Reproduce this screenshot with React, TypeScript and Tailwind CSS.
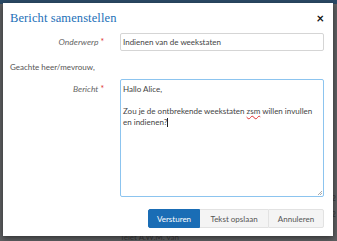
import React from "react";

const App = () => {
  return (
    <div className="relative w-[337px] h-[241px] overflow-hidden bg-[#5f6062] font-['Lato',sans-serif]">
      {/* dimmed page behind the dialog */}
      <div className="h-[4px] bg-[#2b4a66]" />
      <div className="absolute right-[1px] top-[190px] text-[8px] leading-[16px] text-[#3a3a3a]">
        <div>2</div>
        <div>2</div>
      </div>
      <div className="absolute left-[120px] top-[234px] text-[8px] leading-[7px] text-[#3a3a3a]">Telet A.W.M. van</div>

      <div className="absolute left-[3px] top-[3px] w-[330px] h-[233px] bg-white shadow-[0_2px_6px_rgba(0,0,0,0.5)] flex flex-col">
        <div className="flex items-center justify-between pl-[7px] pr-[9px] pt-[2px] h-[28px]">
          <h1 className="text-[12.5px] text-[#1c6fb8] font-['Liberation_Serif',serif] tracking-[0.1px]">
            Bericht samenstellen
          </h1>
          <span className="text-[13px] font-bold text-[#111] leading-none">×</span>
        </div>

        <div className="flex items-center mt-[2px]">
          <label className="w-[104px] text-right pr-[3px] text-[8.5px] italic text-[#666]">
            Onderwerp <span className="text-[#e03030] not-italic">*</span>
          </label>
          <div className="ml-[13px] w-[204px] h-[18px] border border-[#d5d5d5] rounded-[2px] flex items-center px-[2px] text-[8px] text-[#444]">
            Indienen van de weekstaten
          </div>
        </div>

        <div className="pl-[7px] mt-[10px] text-[8px] text-[#555]">Geachte heer/mevrouw,</div>

        <div className="flex items-start mt-[6px]">
          <label className="w-[104px] text-right pr-[3px] mt-[4px] text-[8.5px] italic text-[#666]">
            Bericht <span className="text-[#e03030] not-italic">*</span>
          </label>
          <div className="relative ml-[13px] w-[204px] h-[118px] border border-[#8cc4ef] rounded-[2px] px-[2px] pt-[4px] text-[8px] leading-[11px] text-[#444]">
            <div>Hallo Alice,</div>
            <div>&nbsp;</div>
            <div className="whitespace-nowrap">
              Zou je de ontbrekende weekstaten{" "}
              <span className="underline decoration-wavy decoration-[#e03030] decoration-[0.5px]">zsm</span> willen invullen
            </div>
            <div>
              en indienen?<span className="inline-block w-[1px] h-[9px] bg-[#222] align-middle" />
            </div>
            <svg className="absolute right-[1px] bottom-[1px]" width="5" height="5" viewBox="0 0 5 5">
              <path d="M1 5 L5 1 M3 5 L5 3" stroke="#888" strokeWidth="0.7" />
            </svg>
          </div>
        </div>

        <div className="flex justify-end mt-[12px] pr-[9px]">
          <button className="h-[19px] w-[52px] bg-[#1a6db5] text-white text-[8px] rounded-l-[2px] border border-[#1a6db5]">
            Versturen
          </button>
          <button className="h-[19px] w-[68px] bg-[#f4f4f4] text-[#555] text-[8px] border-y border-[#e2e2e2]">
            Tekst opslaan
          </button>
          <button className="h-[19px] w-[56px] bg-[#f4f4f4] text-[#555] text-[8px] border border-[#e2e2e2] rounded-r-[2px]">
            Annuleren
          </button>
        </div>
      </div>
    </div>
  );
};

export default App;
